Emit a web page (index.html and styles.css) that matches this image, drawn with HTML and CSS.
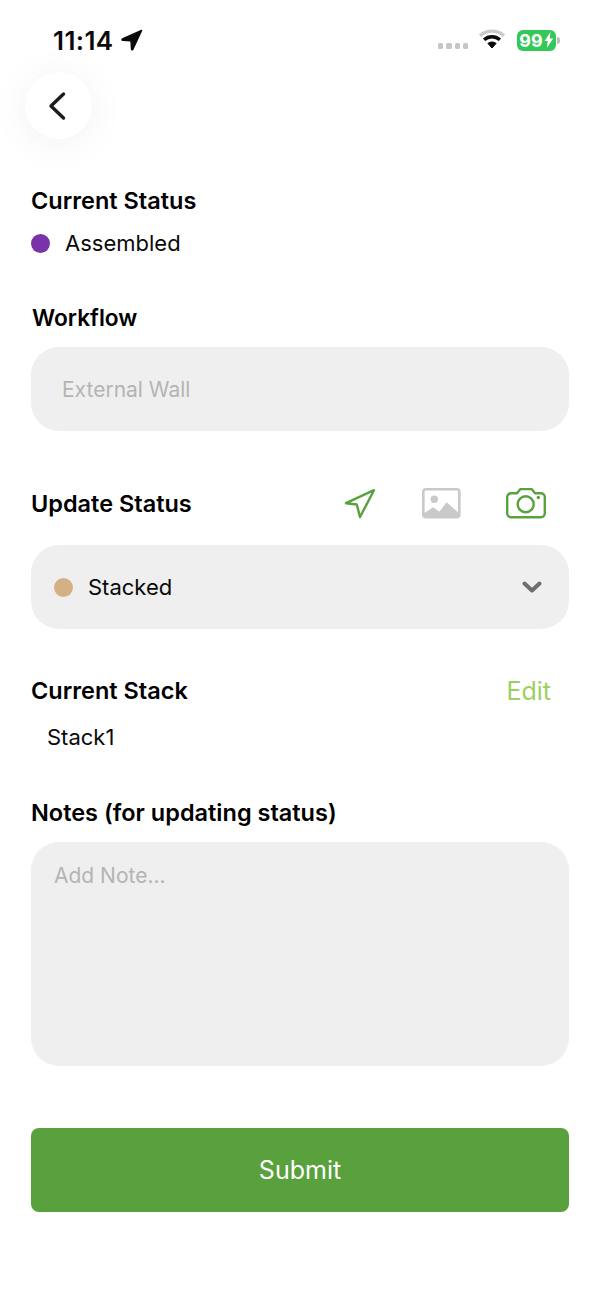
FILE: index.html
```html
<!DOCTYPE html>
<html>
<head>
    <meta charset="utf-8">
    <title>Update Status</title>
    <link rel="stylesheet" href="styles.css">
</head>
<body>
    <div class="statusbar">
        <div class="clock">
            <span>11:14</span>
            <svg class="loc-arrow" width="22" height="22" viewBox="0 0 22 22"><path d="M20.6 1.4 1.4 10c-.7.4-.5 1.3.3 1.3l8.3.4.5 8.4c0 .8 1 1 1.3.3z" fill="#0a0a0a" stroke="#0a0a0a" stroke-width="1.4" stroke-linejoin="round"/></svg>
        </div>
        <div class="sysicons">
            <div class="signal"><i></i><i></i><i></i><i></i></div>
            <svg class="wifi" width="28" height="20" viewBox="0 0 27 20">
                <path d="M1.5 6.8C8.3.6 18.7.6 25.500 6.800" fill="none" stroke="#c9c9c9" stroke-width="3.4"/>
                <path d="M5.6 10.8c4.6-4 11.2-4 15.8 0" fill="none" stroke="#0a0a0a" stroke-width="3.4"/>
                <path d="M9.4 14.4c2.4-1.9 5.8-1.9 8.2 0L13.5 19z" fill="#0a0a0a" stroke="#0a0a0a" stroke-width="1"/>
            </svg>
            <div class="battery">
                <span class="battery-body">99<svg width="10" height="16" viewBox="0 0 10 16"><path d="M6.4 0 .6 9h3.2L2.8 16l6.4-9.6H5.8z" fill="#fff"/></svg></span>
                <span class="battery-cap"></span>
            </div>
        </div>
    </div>

    <div class="backwrap">
        <button class="back">
            <svg width="24" height="32" viewBox="0 0 24 32"><path d="M18.5 4 6 16l12.5 12" fill="none" stroke="#1c1c1c" stroke-width="3.4" stroke-linecap="round" stroke-linejoin="round"/></svg>
        </button>
    </div>

    <div class="content">
        <h2 class="label first">Current Status</h2>
        <div class="status-now">
            <span class="dot purple"></span>
            <span>Assembled</span>
        </div>

        <h2 class="label workflow">Workflow</h2>
        <div class="field placeholder">External Wall</div>

        <div class="update-head">
            <h2 class="label">Update Status</h2>
            <div class="actions">
                <svg width="32" height="32" viewBox="0 0 32 32"><path d="M30 2.2 2 15.2l10.800 1.300L16 29z" fill="none" stroke="#58a13d" stroke-width="2.4" stroke-linejoin="round"/></svg>
                <svg width="40" height="32" viewBox="0 0 40 32">
                    <rect x="2.300" y="1.300" width="36" height="28" rx="2.500" fill="none" stroke="#c9c9c9" stroke-width="2.600"/>
                    <circle cx="13.300" cy="11.300" r="3.700" fill="#c9c9c9"/>
                    <path d="M3 29v-3.700l9.300-6 6 4.400 7.400-9.400L38 25.300V29z" fill="#c9c9c9"/>
                </svg>
                <svg width="40" height="32" viewBox="0 0 40 32">
                    <path d="M5 5.200h6l3-3.600c.3-.4.8-.6 1.300-.6h9.400c.5 0 1 .2 1.300.6l3 3.600h6c2 0 3.800 1.700 3.800 3.800v16.600c0 2-1.800 3.600-3.800 3.600H5c-2 0-3.800-1.600-3.800-3.600V9c0-2.100 1.800-3.800 3.800-3.800z" fill="none" stroke="#58a13d" stroke-width="2.400"/>
                    <circle cx="19.700" cy="16.300" r="8" fill="none" stroke="#58a13d" stroke-width="2.400"/>
                    <circle cx="32.300" cy="9.500" r="1.700" fill="#58a13d"/>
                </svg>
            </div>
        </div>
        <div class="field select">
            <span class="dot tan"></span>
            <span class="select-text">Stacked</span>
            <svg class="chevron" width="20" height="12" viewBox="0 0 20 12"><path d="M2.500 2.500 10 9.500l7.500-7" fill="none" stroke="#6e6e6e" stroke-width="4" stroke-linecap="round" stroke-linejoin="round"/></svg>
        </div>

        <div class="stack-head">
            <h2 class="label">Current Stack</h2>
            <span class="edit">Edit</span>
        </div>
        <div class="stack-name">Stack1</div>

        <h2 class="label notes-label">Notes (for updating status)</h2>
        <div class="notes">Add Note...</div>

        <button class="submit">Submit</button>
    </div>
</body>
</html>
```

FILE: styles.css
```css
* {
    box-sizing: border-box;
}

body, html {
    margin: 0;
    padding: 0;
    background: #fff;
}

body {
    font-family: 'Inter', 'Liberation Sans', sans-serif;
    color: #0a0a0a;
    height: 1298px;
    overflow: hidden;
}

/* status bar */
.statusbar {
    height: 72px;
    display: flex;
    justify-content: space-between;
    align-items: center;
    padding: 8px 40px 0 53px;
}

.clock {
    display: flex;
    align-items: center;
    gap: 7px;
    font-size: 26px;
    font-weight: 600;
    letter-spacing: 0.4px;
}

.sysicons {
    display: flex;
    align-items: center;
}

.signal {
    display: flex;
    gap: 3px;
    margin-right: 10px;
    margin-top: 12px;
}

.signal i {
    width: 5.25px;
    height: 5.25px;
    border-radius: 1.5px;
    background: #c6c6c6;
}

.wifi {
    margin-right: 11px;
    margin-top: -2px;
}

.battery {
    display: flex;
    align-items: center;
}

.battery-body {
    width: 39px;
    height: 21px;
    border-radius: 6px;
    background: #34c759;
    color: #fff;
    font-size: 18px;
    font-weight: 700;
    display: flex;
    align-items: center;
    justify-content: center;
    gap: 1px;
}

.battery-cap {
    width: 3px;
    height: 7px;
    margin-left: 1px;
    border-radius: 0 3px 3px 0;
    background: #bdbdbd;
}

/* back button */
.backwrap {
    padding-left: 25px;
}

.back {
    display: flex;
    align-items: center;
    justify-content: center;
    width: 67px;
    height: 67px;
    padding: 0 4px 0 0;
    border: none;
    border-radius: 50%;
    background: #fff;
    box-shadow: 0 4px 40px rgba(0, 0, 0, 0.06);
}

/* form */
.content {
    padding: 0 31px;
}

.label {
    margin: 0;
    font-size: 23.5px;
    line-height: 28px;
    font-weight: 600;
    color: #000;
}

.first {
    margin-top: 48px;
}

.status-now {
    display: flex;
    align-items: center;
    gap: 15px;
    margin-top: 14px;
    font-size: 22px;
    line-height: 28px;
}

.dot {
    width: 19px;
    height: 19px;
    border-radius: 50%;
    flex: none;
}

.purple {
    background: #7a32a8;
}

.tan {
    background: #d4b185;
}

.workflow {
    margin-top: 47px;
    padding-left: 1px;
    font-size: 22.7px;
}

.field {
    height: 84px;
    margin-top: 15px;
    border-radius: 28px;
    background: #efefef;
    display: flex;
    align-items: center;
    font-size: 22px;
}

.placeholder {
    padding-left: 31px;
    color: #b4b4b4;
    font-size: 21px;
}

.update-head {
    display: flex;
    justify-content: space-between;
    align-items: center;
    margin-top: 57px;
    height: 32px;
}

.actions {
    display: flex;
    align-items: center;
    gap: 45px;
    padding-right: 23px;
}

.select {
    margin-top: 25px;
    padding: 0 27px 0 23px;
}

.select-text {
    margin-left: 15px;
    flex: 1;
}

.stack-head {
    display: flex;
    justify-content: space-between;
    align-items: center;
    margin-top: 47px;
}

.edit {
    padding-right: 18px;
    font-size: 25px;
    color: #9ccf60;
}

.stack-name {
    margin-top: 17px;
    padding-left: 16px;
    font-size: 22px;
    line-height: 28px;
}

.notes-label {
    margin-top: 48px;
}

.notes {
    height: 224px;
    margin-top: 15px;
    padding: 20px 23px;
    border-radius: 28px;
    background: #efefef;
    color: #b4b4b4;
    font-size: 21px;
    line-height: 28px;
}

.submit {
    display: block;
    width: 100%;
    height: 84px;
    margin-top: 62px;
    border: none;
    border-radius: 8px;
    background: #58a13d;
    color: #fff;
    font-family: inherit;
    font-size: 25px;
}
```
